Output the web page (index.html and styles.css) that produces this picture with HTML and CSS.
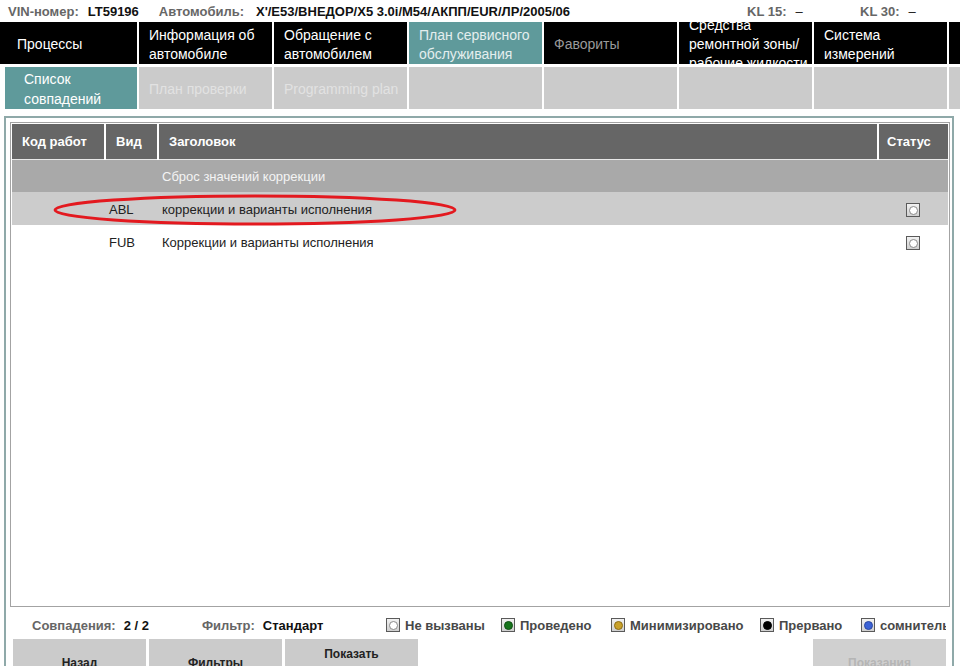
FILE: index.html
```html
<!DOCTYPE html>
<html lang="ru">

<head>
    <meta charset="UTF-8">
    <meta name="viewport" content="width=device-width, initial-scale=1.0">
    <title>План сервисного обслуживания</title>
    <link rel="stylesheet" href="styles.css">
</head>

<body>
    <header class="topbar">
        <span class="top-label">VIN-номер:</span>
        <span class="top-value vin">LT59196</span>
        <span class="top-label">Автомобиль:</span>
        <span class="top-value car">X'/E53/ВНЕДОР/X5 3.0i/M54/АКПП/EUR/ЛР/2005/06</span>
        <span class="kl kl-first"><span class="top-label">KL 15:</span><span class="kl-value">–</span></span>
        <span class="kl kl-last"><span class="top-label">KL 30:</span><span class="kl-value">–</span></span>
    </header>

    <nav class="tabs">
        <div class="tab tab-first">Процессы</div>
        <div class="tab">Информация об<br>автомобиле</div>
        <div class="tab">Обращение с<br>автомобилем</div>
        <div class="tab tab-active">План сервисного<br>обслуживания</div>
        <div class="tab tab-disabled">Фавориты</div>
        <div class="tab">Средства<br>ремонтной зоны/<br>рабочие жидкости</div>
        <div class="tab">Система<br>измерений</div>
        <div class="tab"></div>
    </nav>

    <nav class="subtabs">
        <div class="subtab subtab-first subtab-active">Список<br>совпадений</div>
        <div class="subtab">План проверки</div>
        <div class="subtab">Programming plan</div>
        <div class="subtab"></div>
        <div class="subtab"></div>
        <div class="subtab"></div>
        <div class="subtab"></div>
        <div class="subtab"></div>
    </nav>

    <main class="panel">
        <section class="results">
            <table class="results-table">
                <colgroup>
                    <col class="col-code">
                    <col class="col-kind">
                    <col class="col-title">
                    <col class="col-status">
                </colgroup>
                <thead>
                    <tr>
                        <th>Код работ</th>
                        <th>Вид</th>
                        <th>Заголовок</th>
                        <th>Статус</th>
                    </tr>
                </thead>
                <tbody>
                    <tr class="group-row">
                        <td></td>
                        <td></td>
                        <td>Сброс значений коррекции</td>
                        <td></td>
                    </tr>
                    <tr class="row-selected">
                        <td></td>
                        <td>ABL</td>
                        <td>коррекции и варианты исполнения</td>
                        <td class="status-cell"><span class="status-icon"><span class="dot dot-none"></span></span></td>
                    </tr>
                    <tr>
                        <td></td>
                        <td>FUB</td>
                        <td>Коррекции и варианты исполнения</td>
                        <td class="status-cell"><span class="status-icon"><span class="dot dot-none"></span></span></td>
                    </tr>
                </tbody>
            </table>

            <svg class="marker" width="936" height="150" viewBox="0 0 936 150">
                <ellipse cx="243" cy="86" rx="200" ry="14" fill="none" stroke="#e3191f" stroke-width="3" />
            </svg>
        </section>

        <div class="summary">
            <div class="summary-group summary-matches">
                <span class="summary-label">Совпадения:</span>
                <span class="summary-value">2 / 2</span>
            </div>
            <div class="summary-group summary-filter">
                <span class="summary-label">Фильтр:</span>
                <span class="summary-value">Стандарт</span>
            </div>
            <div class="legend legend-none"><span class="status-icon"><span class="dot dot-none"></span></span>Не вызваны</div>
            <div class="legend legend-done"><span class="status-icon"><span class="dot dot-green"></span></span>Проведено</div>
            <div class="legend legend-min"><span class="status-icon"><span class="dot dot-gold"></span></span>Минимизировано</div>
            <div class="legend legend-abort"><span class="status-icon"><span class="dot dot-black"></span></span>Прервано</div>
            <div class="legend"><span class="status-icon"><span class="dot dot-blue"></span></span>сомнительно</div>
        </div>

        <div class="buttons">
            <button class="btn">Назад</button>
            <button class="btn">Фильтры</button>
            <button class="btn">Показать<br>подробности</button>
            <button class="btn btn-disabled">Показания</button>
        </div>
    </main>
</body>

</html>
```

FILE: styles.css
```css
html {
    box-sizing: border-box;
}

*,
*::before,
*::after {
    box-sizing: inherit;
    margin: 0;
    padding: 0;
}

:root {
    --teal: #5f9a9b;
    --tab-grey: #cbcbcb;
    --head-grey: #666;
    --frame: #8fa9a9;
}

body {
    background-color: #fff;
    font-family: 'Liberation Sans', Arial, sans-serif;
    color: #222;
    overflow: hidden;
}

/* top info line */
.topbar {
    display: flex;
    align-items: center;
    height: 22px;
    padding-left: 8px;
    font-size: 13px;
    font-weight: bold;
    white-space: nowrap;
    overflow: hidden;
}

.top-label {
    color: #666;
}

.top-value {
    color: #111;
    margin-left: 9px;
}

.vin {
    margin-right: 20px;
}

.car {
    margin-left: 12px;
}

.kl {
    display: flex;
    width: 113px;
    flex-shrink: 0;
}

.kl-first {
    margin-left: auto;
}

.kl-last {
    width: 100px;
}

.kl-value {
    margin-left: 9px;
    color: #111;
    font-weight: normal;
}

/* tabs */
.tabs,
.subtabs {
    display: grid;
    grid-template-columns: 137px repeat(6, 133px) 12px;
    column-gap: 2px;
    height: 42px;
}

.subtabs {
    grid-template-columns: 132px repeat(6, 133px) 12px;
    padding-left: 5px;
    margin-top: 3px;
}

.tab,
.subtab {
    display: flex;
    align-items: center;
    overflow: hidden;
    padding: 3px 0 0 10px;
    font-size: 14px;
    line-height: 19px;
    white-space: nowrap;
}

.tab {
    background-color: #000;
    color: #fff;
}

.tab-first {
    padding-left: 17px;
}

.tab-active {
    background-color: var(--teal);
    color: #e4eeee;
}

.tab-disabled {
    color: #9a9a9a;
}

.subtab {
    background-color: var(--tab-grey);
    color: #e2e2e2;
    line-height: 20px;
    padding-top: 2px;
}

.subtab-first {
    padding-left: 19px;
}

.subtab-active {
    background-color: var(--teal);
    color: #fff;
}

/* main panel */
.panel {
    margin: 7px 6px 0 4px;
    border: 2px solid var(--frame);
    border-bottom: none;
    padding: 4px 2px 0 4px;
    height: 560px;
}

.results {
    position: relative;
    height: 485px;
    border: 1px solid #a3a3a3;
    padding: 1px;
}

.results-table {
    width: 936px;
    table-layout: fixed;
    border-collapse: collapse;
    font-size: 13px;
}

.col-code {
    width: 93px;
}

.col-kind {
    width: 53px;
}

.col-title {
    width: 720px;
}

.col-status {
    width: 70px;
}

.results-table th {
    height: 35px;
    background-color: var(--head-grey);
    color: #fff;
    font-weight: bold;
    text-align: left;
    padding: 1px 0 0 10px;
    border-bottom: 1px solid #e8e8e8;
}

.results-table th + th {
    border-left: 2px solid #fff;
}

.results-table th:last-child {
    padding-left: 8px;
}

.results-table td {
    height: 33px;
    padding: 1px 0 0 4px;
    color: #222;
}

.group-row td {
    background-color: #a9a9a9;
    color: #f4f4f4;
}

.row-selected td {
    background-color: #cccccc;
}

.status-cell {
    text-align: center;
}

.results-table .status-cell {
    padding-left: 0;
    padding-top: 2px;
}

.marker {
    position: absolute;
    left: 1px;
    top: 1px;
    pointer-events: none;
}

/* status icons */
.status-icon {
    display: inline-flex;
    align-items: center;
    justify-content: center;
    width: 14px;
    height: 14px;
    border: 1px solid #5a5a5a;
    background: linear-gradient(#f2f2f2, #cfcfcf);
    vertical-align: middle;
}

.dot {
    width: 9px;
    height: 9px;
    border-radius: 50%;
    border: 1px solid #8a8a8a;
    background-color: #fff;
}

.dot-green {
    background-color: #16741c;
    border-color: #0e4f12;
}

.dot-gold {
    background-color: #c9a12a;
    border-color: #8c6d14;
}

.dot-black {
    background-color: #000;
    border-color: #000;
}

.dot-blue {
    background-color: #3b62d6;
    border-color: #2a47a0;
}

/* summary + legend */
.summary {
    display: flex;
    align-items: center;
    height: 32px;
    width: 936px;
    padding: 4px 0 0 22px;
    font-size: 13px;
    font-weight: bold;
    white-space: nowrap;
    overflow: hidden;
}

.summary-group {
    display: flex;
    flex-shrink: 0;
}

.summary-matches {
    width: 170px;
}

.summary-filter {
    width: 184px;
}

.summary-label {
    color: #666;
}

.summary-value {
    color: #111;
    margin-left: 8px;
}

.legend {
    display: flex;
    align-items: center;
    gap: 5px;
    flex-shrink: 0;
    color: #484848;
}

.legend-none {
    width: 115px;
}

.legend-done {
    width: 110px;
}

.legend-min {
    width: 149px;
}

.legend-abort {
    width: 101px;
}

/* buttons */
.buttons {
    display: flex;
    gap: 3px;
    padding: 0 4px 0 3px;
}

.btn {
    width: 133px;
    height: 48px;
    border: none;
    background-color: var(--tab-grey);
    font-family: inherit;
    font-size: 12px;
    font-weight: bold;
    line-height: 18px;
    color: #222;
}

.btn-disabled {
    margin-left: auto;
    background-color: #d0d0d0;
    color: #b5b5b5;
}
```
